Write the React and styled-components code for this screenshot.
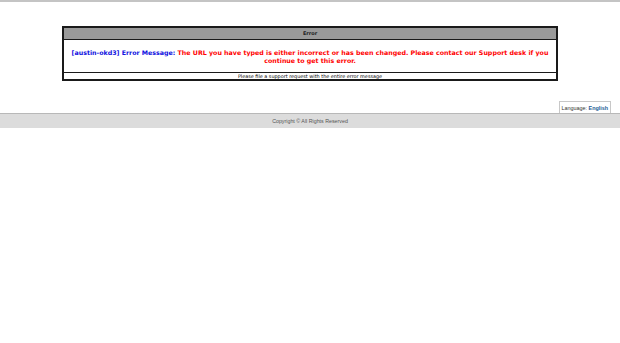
import React from "react";
import styled, { createGlobalStyle } from "styled-components";

const GlobalStyle = createGlobalStyle`
  html, body {
    margin: 0;
    padding: 0;
    background: #fff;
  }
  body {
    border-top: 2px solid #c4c4c4;
    font-family: "DejaVu Sans", Verdana, sans-serif;
  }
`;

const App = () => {
  return (
    <>
      <GlobalStyle />
      <Page>
        <ErrorTable>
          <HeaderRow>Error</HeaderRow>
          <MessageRow>
            <Tenant>[austin-okd3] Error Message: </Tenant>
            <Message>
              The URL you have typed is either incorrect or has been changed.
              Please contact our Support desk if you continue to get this error.
            </Message>
          </MessageRow>
          <NoteRow>Please file a support request with the entire error message</NoteRow>
        </ErrorTable>
        <LangBar>
          <LangBox>
            Language: <LangLink>English</LangLink>
          </LangBox>
        </LangBar>
        <Footer>Copyright © All Rights Reserved</Footer>
      </Page>
    </>
  );
};

const Page = styled.div`
  display: flex;
  flex-direction: column;
  padding-top: 24px;
`;

const ErrorTable = styled.div`
  width: 492px;
  margin: 0 auto;
  border: 2px solid #1a1a1a;
  display: flex;
  flex-direction: column;
`;

const HeaderRow = styled.div`
  background: #9a9a9a;
  border-bottom: 1px solid #1a1a1a;
  height: 11px;
  line-height: 11px;
  text-align: center;
  font-size: 5px;
  font-weight: bold;
  color: #222;
`;

const MessageRow = styled.div`
  padding: 9px 6px 7px;
  text-align: center;
  font-size: 6.3px;
  line-height: 8px;
  font-weight: bold;
  border-bottom: 1px solid #1a1a1a;
`;

const Tenant = styled.span`
  color: #1010e0;
`;

const Message = styled.span`
  color: #f00;
`;

const NoteRow = styled.div`
  height: 6px;
  line-height: 6px;
  text-align: center;
  font-size: 4.9px;
  color: #000;
`;

const LangBar = styled.div`
  display: flex;
  justify-content: flex-end;
  margin-top: 20px;
  padding-right: 9px;
`;

const LangBox = styled.div`
  border: 1px solid #c8c8c8;
  border-bottom: none;
  padding: 0 2px;
  height: 11px;
  line-height: 12px;
  font-family: "Liberation Sans", Arial, sans-serif;
  font-size: 5.4px;
  color: #333;
`;

const LangLink = styled.span`
  color: #1d5b94;
  font-weight: bold;
`;

const Footer = styled.div`
  background: #dcdcdc;
  border-top: 1px solid #b8b8b8;
  height: 14px;
  line-height: 14px;
  text-align: center;
  font-family: "Liberation Sans", Arial, sans-serif;
  font-size: 5.3px;
  color: #555;
`;

export default App;
